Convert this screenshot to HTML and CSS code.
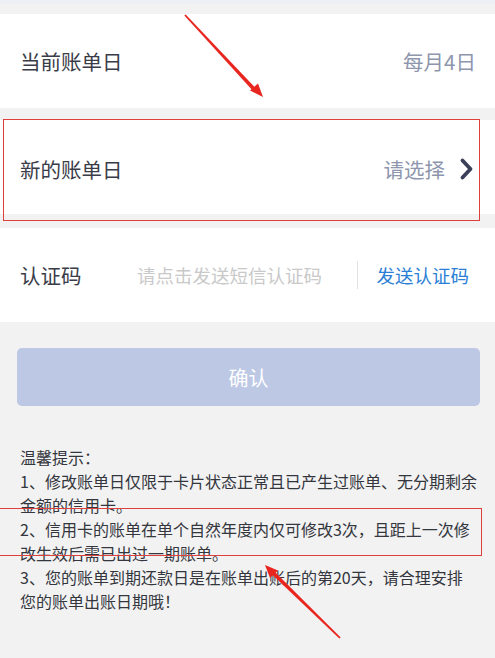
FILE: index.html
```html
<!DOCTYPE html>
<html lang="zh-CN">
<head>
  <meta charset="UTF-8" />
  <title>修改账单日</title>
  <link rel="stylesheet" href="styles.css">
</head>
<body>
  <div class="page">
    <div class="top-strip"></div>

    <div class="row row-first">
      <span class="label">当前账单日</span>
      <span class="value">每月4日</span>
    </div>

    <div class="row row-second">
      <span class="label">新的账单日</span>
      <span class="picker">
        <span class="value">请选择</span>
        <svg class="chevron" width="15" height="24" viewBox="0 0 15 24">
          <path d="M3.5 3.5 L11.5 12 L3.5 20.5" fill="none" stroke="#3b4058" stroke-width="3.8" stroke-linecap="round" stroke-linejoin="round"/>
        </svg>
      </span>
    </div>

    <div class="row row-code">
      <span class="label">认证码</span>
      <span class="placeholder">请点击发送短信认证码</span>
      <span class="divider"></span>
      <span class="send">发送认证码</span>
    </div>

    <button class="confirm">确认</button>

    <div class="tips">
      <p>温馨提示：</p>
      <p>1、修改账单日仅限于卡片状态正常且已产生过账单、无分期剩余<br>金额的信用卡。</p>
      <p>2、信用卡的账单在单个自然年度内仅可修改3次，且距上一次修<br>改生效后需已出过一期账单。</p>
      <p>3、您的账单到期还款日是在账单出账后的第20天，请合理安排<br>您的账单出账日期哦！</p>
    </div>

    <!-- annotation marks drawn over the screenshot -->
    <div class="mark mark-row"></div>
    <div class="mark mark-tip"></div>
    <svg class="arrows" width="495" height="658" viewBox="0 0 495 658">
      <polygon points="184.3,15.6 185.7,14.4 257,89.5 254,92 " fill="#e8261f"/>
      <polygon points="263,97 250,90.5 258,83.5" fill="#e8261f"/>
      <polygon points="339.3,638.6 340.7,637.4 274,571 271,573.5" fill="#e8261f"/>
      <polygon points="265,565 278,570.5 270,578" fill="#e8261f"/>
    </svg>
  </div>
</body>
</html>
```

FILE: styles.css
```css
body {
  margin: 0;
  background: #f2f2f2;
  font-family: "Noto Sans CJK SC", "Noto Sans", sans-serif;
  color: #3a3d48;
}
.page {
  position: relative;
  width: 495px;
  height: 658px;
  overflow: hidden;
}
.top-strip {
  height: 4px;
  background: #edf0f5;
  margin-bottom: 10px;
}
.row {
  height: 94px;
  background: #fff;
  display: flex;
  align-items: center;
  justify-content: space-between;
  padding: 0 19px 0 20px;
}
.row-first {
  margin-bottom: 12px;
}
.row-second {
  margin-bottom: 14px;
  padding-right: 21px;
}
.row-second .label,
.row-second .picker {
  margin-top: 3px;
}
.label {
  font-size: 20.5px;
  color: #3a3d48;
}
.value {
  font-size: 20.5px;
  color: #8d96ac;
}
.picker {
  display: flex;
  align-items: center;
  gap: 14px;
}
.chevron {
  display: block;
}
.row-code {
  justify-content: flex-start;
  padding-right: 26px;
}
.row-code .label {
  width: 117px;
}
.placeholder {
  font-size: 18.5px;
  color: #c9c9c9;
  flex: 1;
}
.divider {
  width: 1px;
  height: 28px;
  background: #e2e2e2;
  margin: 0 18px 0 0;
}
.send {
  font-size: 18.5px;
  color: #2b7fd6;
}
.confirm {
  display: block;
  width: 463px;
  height: 58px;
  margin: 26px 0 0 17px;
  border: none;
  border-radius: 5px;
  background: #bdc8e5;
  color: #fff;
  font-family: inherit;
  font-size: 20px;
}
.tips {
  margin-top: 39px;
  padding: 0 10px 0 20px;
  font-size: 16px;
  line-height: 24px;
  color: #34363d;
  white-space: nowrap;
}
.tips p {
  margin: 0;
}
.mark {
  position: absolute;
  border: 1.5px solid #e0403c;
}
.mark-row {
  left: 3px;
  top: 119px;
  width: 475px;
  height: 100px;
}
.mark-tip {
  left: -1px;
  top: 508px;
  width: 481px;
  height: 46px;
}
.arrows {
  position: absolute;
  left: 0;
  top: 0;
}
```
